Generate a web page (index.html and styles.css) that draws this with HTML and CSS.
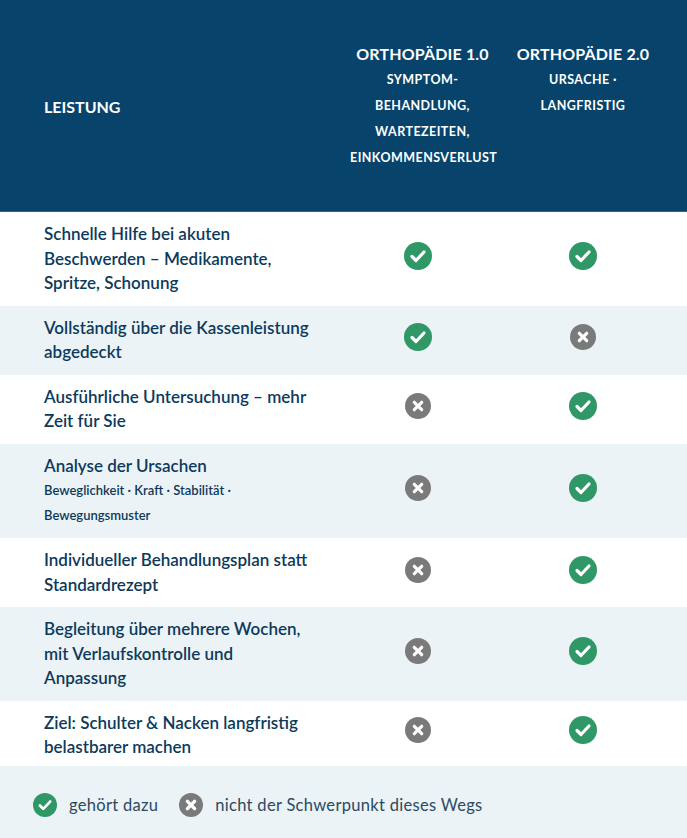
FILE: index.html
```html
<!DOCTYPE html>
<html lang="de">
<head>
<meta charset="utf-8">
<title>Orthopädie 1.0 vs 2.0</title>
<link rel="stylesheet" href="styles.css">
</head>
<body>
<div class="cmp">
  <div class="row head">
    <div class="cell label-h">LEISTUNG</div>
    <div class="cell col-h">
      <div class="col-title">ORTHOPÄDIE 1.0</div>
      <div class="col-sub">SYMPTOM-BEHANDLUNG, WARTEZEITEN, EINKOMMENSVERLUST</div>
    </div>
    <div class="cell col-h">
      <div class="col-title">ORTHOPÄDIE 2.0</div>
      <div class="col-sub">URSACHE · LANGFRISTIG</div>
    </div>
  </div>

  <div class="row">
    <div class="cell label">Schnelle Hilfe bei akuten Beschwerden – Medikamente, Spritze, Schonung</div>
    <div class="cell ic"><svg class="i-yes" viewBox="0 0 28 28"><circle cx="14" cy="14" r="14"/><path d="M8 14.5l4 4 8-8.5"/></svg></div>
    <div class="cell ic"><svg class="i-yes" viewBox="0 0 28 28"><circle cx="14" cy="14" r="14"/><path d="M8 14.5l4 4 8-8.5"/></svg></div>
  </div>

  <div class="row alt">
    <div class="cell label">Vollständig über die Kassenleistung abgedeckt</div>
    <div class="cell ic"><svg class="i-yes" viewBox="0 0 28 28"><circle cx="14" cy="14" r="14"/><path d="M8 14.5l4 4 8-8.5"/></svg></div>
    <div class="cell ic"><svg class="i-no" viewBox="0 0 28 28"><circle cx="14" cy="14" r="13"/><path d="M10.3 10.3l7.4 7.4M17.7 10.3l-7.4 7.4"/></svg></div>
  </div>

  <div class="row">
    <div class="cell label">Ausführliche Untersuchung – mehr Zeit für Sie</div>
    <div class="cell ic"><svg class="i-no" viewBox="0 0 28 28"><circle cx="14" cy="14" r="13"/><path d="M10.3 10.3l7.4 7.4M17.7 10.3l-7.4 7.4"/></svg></div>
    <div class="cell ic"><svg class="i-yes" viewBox="0 0 28 28"><circle cx="14" cy="14" r="14"/><path d="M8 14.5l4 4 8-8.5"/></svg></div>
  </div>

  <div class="row alt">
    <div class="cell label">Analyse der Ursachen<div class="small">Beweglichkeit · Kraft · Stabilität · Bewegungsmuster</div></div>
    <div class="cell ic"><svg class="i-no" viewBox="0 0 28 28"><circle cx="14" cy="14" r="13"/><path d="M10.3 10.3l7.4 7.4M17.7 10.3l-7.4 7.4"/></svg></div>
    <div class="cell ic"><svg class="i-yes" viewBox="0 0 28 28"><circle cx="14" cy="14" r="14"/><path d="M8 14.5l4 4 8-8.5"/></svg></div>
  </div>

  <div class="row">
    <div class="cell label">Individueller Behandlungsplan statt Standardrezept</div>
    <div class="cell ic"><svg class="i-no" viewBox="0 0 28 28"><circle cx="14" cy="14" r="13"/><path d="M10.3 10.3l7.4 7.4M17.7 10.3l-7.4 7.4"/></svg></div>
    <div class="cell ic"><svg class="i-yes" viewBox="0 0 28 28"><circle cx="14" cy="14" r="14"/><path d="M8 14.5l4 4 8-8.5"/></svg></div>
  </div>

  <div class="row alt">
    <div class="cell label">Begleitung über mehrere Wochen, mit Verlaufskontrolle und Anpassung</div>
    <div class="cell ic"><svg class="i-no" viewBox="0 0 28 28"><circle cx="14" cy="14" r="13"/><path d="M10.3 10.3l7.4 7.4M17.7 10.3l-7.4 7.4"/></svg></div>
    <div class="cell ic"><svg class="i-yes" viewBox="0 0 28 28"><circle cx="14" cy="14" r="14"/><path d="M8 14.5l4 4 8-8.5"/></svg></div>
  </div>

  <div class="row last">
    <div class="cell label">Ziel: Schulter &amp; Nacken langfristig belastbarer machen</div>
    <div class="cell ic"><svg class="i-no" viewBox="0 0 28 28"><circle cx="14" cy="14" r="13"/><path d="M10.3 10.3l7.4 7.4M17.7 10.3l-7.4 7.4"/></svg></div>
    <div class="cell ic"><svg class="i-yes" viewBox="0 0 28 28"><circle cx="14" cy="14" r="14"/><path d="M8 14.5l4 4 8-8.5"/></svg></div>
  </div>

  <div class="legend">
    <div class="leg-item"><svg class="i-yes leg-icon" viewBox="0 0 28 28"><circle cx="14" cy="14" r="14"/><path d="M8 14.5l4 4 8-8.5"/></svg><span>gehört dazu</span></div>
    <div class="leg-item"><svg class="i-no leg-icon leg-x" viewBox="0 0 28 28"><circle cx="14" cy="14" r="14"/><path d="M9.8 9.8l8.4 8.4M18.2 9.8l-8.4 8.4"/></svg><span>nicht der Schwerpunkt dieses Wegs</span></div>
  </div>
</div>
</body>
</html>
```

FILE: styles.css
```css
html, body {
  margin: 0;
  padding: 0;
  background: #ecf3f7;
}

body {
  font-family: Lato, "Open Sans", sans-serif;
  color: #0c3a5b;
}

.cmp {
  width: 687px;
}

.row {
  display: grid;
  grid-template-columns: 318px 161px 160px;
  padding: 0 24px;
  background: #ffffff;
}

.row.alt {
  background: #ecf3f7;
}

.row.head {
  background: #07436a;
  color: #ffffff;
  padding-top: 41px;
  padding-bottom: 41px;
  border-bottom: 1px solid #2d6489;
  height: 129px;
  box-sizing: content-box;
}

.cell {
  padding: 10px 28px 10px 20px;
}

.head .cell {
  padding-top: 0;
  padding-bottom: 0;
}

.label-h {
  align-self: center;
  font-size: 16px;
  font-weight: 700;
  letter-spacing: 0;
}

.col-h {
  text-align: center;
  padding: 0 8px;
}

.col-title {
  font-size: 16px;
  font-weight: 700;
  line-height: 26px;
  letter-spacing: 0.15px;
}

.col-sub {
  font-size: 12.5px;
  font-weight: 700;
  line-height: 26px;
  letter-spacing: 0.45px;
}

.label {
  font-size: 17px;
  font-weight: 600;
  line-height: 24.5px;
}

.small {
  font-size: 13px;
  line-height: 25px;
}

.row.last .label {
  padding-bottom: 6px;
}

.ic {
  display: flex;
  align-items: center;
  justify-content: center;
  padding: 0 0 6px 0;
}

.ic:nth-child(2) {
  padding-right: 9px;
}

.ic svg {
  width: 28px;
  height: 28px;
}

.i-yes circle {
  fill: #2f9866;
}

.i-yes path {
  fill: none;
  stroke: #ffffff;
  stroke-width: 3.2;
  stroke-linecap: round;
  stroke-linejoin: round;
}

.i-no circle {
  fill: #7a7a7a;
}

.i-no path {
  fill: none;
  stroke: #ffffff;
  stroke-width: 3.2;
  stroke-linecap: round;
}

.leg-x path {
  stroke-width: 4;
}

.legend {
  display: flex;
  align-items: center;
  gap: 21px;
  padding: 27px 33px 40px;
  background: #ecf3f7;
}

.leg-item {
  display: flex;
  align-items: center;
  gap: 12px;
  font-size: 16.5px;
  letter-spacing: 0.3px;
  color: #2a4a63;
}

.leg-icon {
  width: 24px;
  height: 24px;
}
```
